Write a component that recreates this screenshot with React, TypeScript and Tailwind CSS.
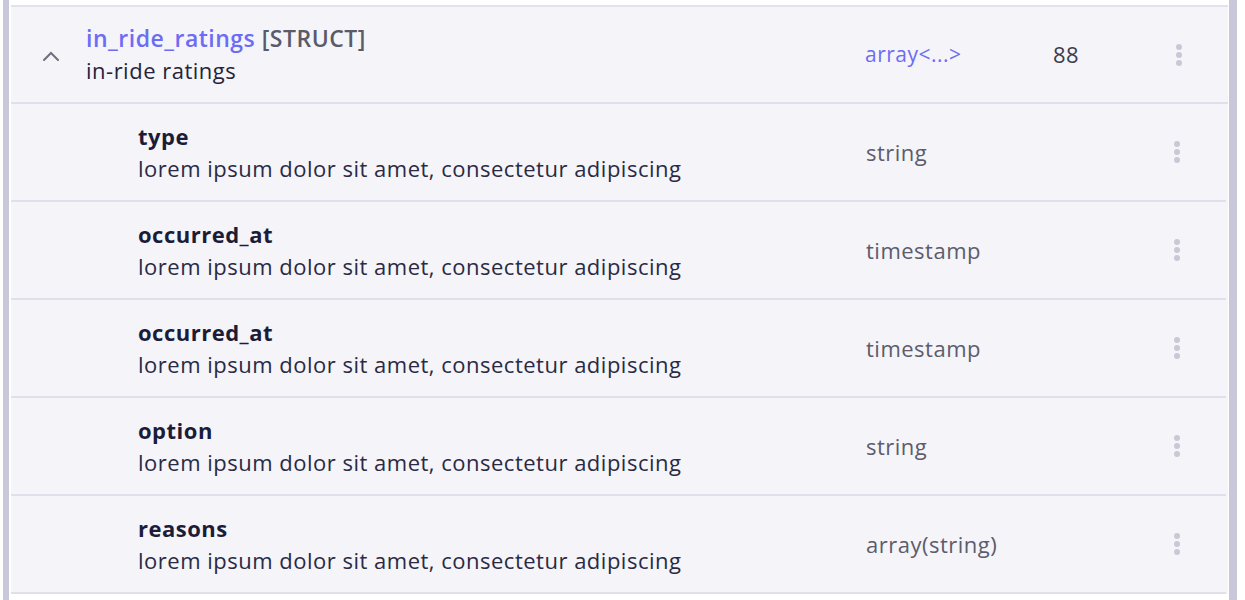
const fields = [
  { name: "type", type: "string" },
  { name: "occurred_at", type: "timestamp" },
  { name: "occurred_at", type: "timestamp" },
  { name: "option", type: "string" },
  { name: "reasons", type: "array(string)" },
];

const desc = "lorem ipsum dolor sit amet, consectetur adipiscing";

const Kebab = () => (
  <div className="flex flex-col items-center gap-[2px]">
    <span className="h-[6px] w-[6px] rounded-full bg-[#c8c8d7]" />
    <span className="h-[6px] w-[6px] rounded-full bg-[#c8c8d7]" />
    <span className="h-[6px] w-[6px] rounded-full bg-[#c8c8d7]" />
  </div>
);

const ChevronUp = () => (
  <svg width="18" height="12" viewBox="0 0 18 12" fill="none">
    <path d="M2 10 L9 3 L16 10" stroke="#6e6e7e" strokeWidth="2" strokeLinecap="round" />
  </svg>
);

export default function App() {
  return (
    <div className="flex h-[600px] w-[1245px] bg-white font-['Open_Sans',sans-serif] tracking-[0.5px]">
      <div className="ml-[3px] w-[6px] bg-[#c9c8da]" />
      <div className="ml-[2px] mt-[5px] flex w-[1217px] flex-col self-start border-t-2 border-[#e2e2ec] bg-[#f4f4f9]">
        {/* header row */}
        <div className="flex h-[97px] items-center border-b-2 border-[#e0e0ea]">
          <div className="flex w-[75px] justify-center pl-[4px] pt-[2px]">
            <ChevronUp />
          </div>
          <div className="flex flex-1 flex-col gap-[7px] leading-[25px]">
            <div className="text-[23px] font-semibold">
              <span className="text-[#6c6cf4]">in_ride_ratings</span>{" "}
              <span className="text-[#5a5a6a]">[STRUCT]</span>
            </div>
            <div className="text-[22px] text-[#24243a]">in-ride ratings</div>
          </div>
          <div className="w-[188px] text-[21px] text-[#6c6cf4]">array&lt;...&gt;</div>
          <div className="w-[100px] text-[22px] text-[#3c3c4c]">88</div>
          <div className="flex w-[75px] justify-center pr-[24px]">
            <Kebab />
          </div>
        </div>
        {fields.map((f, i) => (
          <div
            key={i}
            className="mr-[2px] flex h-[98px] items-center border-b-2 border-[#e0e0ea]"
          >
            <div className="flex flex-1 flex-col gap-[7px] pl-[127px] leading-[25px]">
              <div className="text-[22px] font-bold text-[#1c1c38]">{f.name}</div>
              <div className="text-[22px] text-[#2a2a44]">{desc}</div>
            </div>
            <div className="w-[286px] pl-[1px] text-[22px] text-[#5c5c6c]">{f.type}</div>
            <div className="flex w-[75px] justify-center pr-[24px]">
              <Kebab />
            </div>
          </div>
        ))}
      </div>
      <div className="ml-[1px] w-[8px] bg-[#c9c8da]" />
    </div>
  );
}
